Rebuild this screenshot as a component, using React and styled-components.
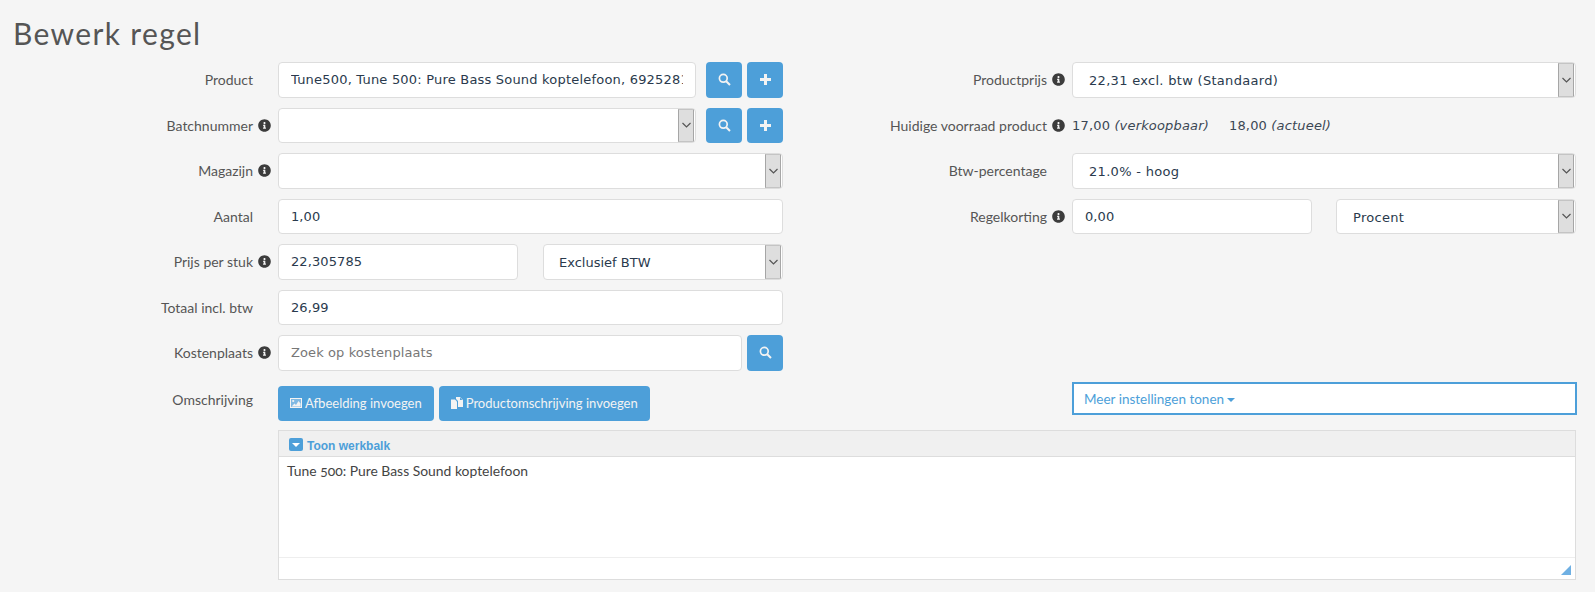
import React from "react";
import styled, { createGlobalStyle } from "styled-components";
import { FaInfoCircle } from "react-icons/fa";

const Global = createGlobalStyle`
    html, body {
        margin: 0;
        padding: 0;
        background: #f5f5f5;
    }
    body {
        height: 592px;
        overflow: hidden;
        font: 14px "Lato", sans-serif;
        color: #555;
    }
`;

const Page = styled.div`
    padding: 15px 19px 0 0;
`;

const Title = styled.h1`
    margin: 0 0 11px 13px;
    height: 36px;
    font: 400 30px/36px "Lato", sans-serif;
    letter-spacing: 1.35px;
    color: #555;
`;

const Columns = styled.div`
    display: flex;
`;

const LeftColumn = styled.div`
    width: 783px;
    display: flex;
    flex-direction: column;
`;

const RightColumn = styled.div`
    width: 793px;
    display: flex;
    flex-direction: column;
`;

const Row = styled.div`
    display: grid;
    grid-template-columns: ${(p) => p.$label}px 1fr;
    height: 35.5px;
    margin-bottom: 10px;
    &:last-child {
        margin-top: 5px;
        margin-bottom: 0;
    }
`;

const LabelCell = styled.label`
    display: flex;
    justify-content: flex-end;
    align-items: ${(p) => (p.$top ? "flex-start" : "center")};
    padding: ${(p) => (p.$top ? "5px 0 0" : "0")};
    padding-right: ${(p) => (p.$info ? "7px" : "25px")};
    font: 14px "Lato", sans-serif;
    color: #555;
    white-space: nowrap;
`;

const Info = styled(FaInfoCircle)`
    width: 13px;
    height: 13px;
    margin-left: 5px;
    color: #3c3c3c;
    align-self: center;
`;

const Controls = styled.div`
    display: flex;
    gap: ${(p) => p.$gap || 5}px;
    min-width: 0;
`;

const TextInput = styled.input`
    flex: ${(p) => (p.$width ? `0 0 ${p.$width}px` : "1 1 0")};
    min-width: 0;
    box-sizing: border-box;
    height: 35.5px;
    padding: 0 12px;
    background: #fff;
    border: 1px solid #ddd;
    border-radius: 4px;
    font: 13px "DejaVu Sans", sans-serif;
    letter-spacing: ${(p) => (p.$long ? "0.2px" : "0.1px")};
    color: #2a3a4d;
    outline: none;
    &::placeholder {
        color: #777;
        opacity: 1;
    }
`;

const Select = styled.div`
    flex: ${(p) => (p.$width ? `0 0 ${p.$width}px` : "1 1 0")};
    min-width: 0;
    box-sizing: border-box;
    height: 35.5px;
    display: flex;
    justify-content: space-between;
    background: #fff;
    border: 1px solid #ddd;
    border-radius: 4px;
    overflow: hidden;
    font: 13px/35px "DejaVu Sans", sans-serif;
    letter-spacing: ${(p) => (p.$wide ? "0.3px" : "0")};
    color: #2a3a4d;
`;

const SelectValue = styled.span`
    padding-left: ${(p) => (p.$wide ? 16 : 15)}px;
`;

const SelectArrow = styled.span`
    width: 16px;
    box-sizing: border-box;
    margin-right: 1px;
    display: flex;
    align-items: center;
    justify-content: center;
    background: #dedede;
    border: 1px solid #a6a6a6;
    border-top-color: #c4c4c4;
    border-bottom-color: #c4c4c4;
    svg {
        width: 9px;
        height: 6px;
        fill: none;
        stroke: #555;
        stroke-width: 1.2;
    }
`;

const IconButton = styled.button`
    flex: 0 0 36px;
    height: 35.5px;
    margin-left: ${(p) => (p.$first ? "5px" : "0")};
    padding: 0;
    display: flex;
    align-items: center;
    justify-content: center;
    border: 0;
    border-radius: 4px;
    background: #4d9fd9;
    color: #f3f3f3;
    svg {
        width: 13px;
        height: 13px;
    }
`;

const TextButton = styled.button`
    height: 35.5px;
    padding: 0 12px;
    display: flex;
    align-items: center;
    gap: 3px;
    border: 0;
    border-radius: 4px;
    background: #4d9fd9;
    color: #f3f3f3;
    font: 13px "Lato", sans-serif;
    white-space: nowrap;
    svg {
        width: 12px;
        height: 12px;
    }
`;

const StaticValue = styled.div`
    display: flex;
    align-items: center;
    gap: 20px;
    padding-top: 1px;
    font: 13px "DejaVu Sans", sans-serif;
    letter-spacing: 0.17px;
    color: #3b4754;
`;

const MoreButton = styled.button`
    margin-top: auto;
    margin-bottom: 6px;
    margin-left: 289px;
    box-sizing: border-box;
    width: 505px;
    height: 33px;
    padding: 0 10px;
    display: flex;
    align-items: center;
    gap: 3px;
    background: #fff;
    border: 2px solid #4d9fd9;
    font: 13.5px "Lato", sans-serif;
    color: #4d9fd9;
`;

const Caret = styled.span`
    border-left: 4px solid transparent;
    border-right: 4px solid transparent;
    border-top: 4px solid #4d9fd9;
    margin-top: 2px;
`;

const Editor = styled.div`
    position: relative;
    box-sizing: border-box;
    margin: 9px 0 0 278px;
    width: 1298px;
    height: 150px;
    display: flex;
    flex-direction: column;
    background: #fff;
    border: 1px solid #ddd;
`;

const EditorBar = styled.div`
    height: 26px;
    box-sizing: border-box;
    padding: 5px 10px 0;
    display: flex;
    align-items: center;
    gap: 4px;
    background: #f0f0f0;
    border-bottom: 1px solid #ddd;
    font: bold 12px "Liberation Sans", sans-serif;
    color: #4d9fd9;
`;

const BarToggle = styled.span`
    width: 14px;
    height: 13px;
    margin-top: -3px;
    display: flex;
    align-items: center;
    justify-content: center;
    border-radius: 2px;
    background: #4d9fd9;
    &::after {
        content: "";
        border-left: 4px solid transparent;
        border-right: 4px solid transparent;
        border-top: 4px solid #fff;
    }
`;

const EditorBody = styled.div`
    flex: 1;
    padding: 5px 8px;
    font: 13.9px "Lato", sans-serif;
    font-variant-numeric: oldstyle-nums;
    color: #444;
`;

const EditorFoot = styled.div`
    height: 21px;
    border-top: 1px solid #eee;
`;

const Grip = styled.svg`
    position: absolute;
    right: 4px;
    bottom: 4px;
    width: 10px;
    height: 10px;
    fill: #6fb0e3;
`;

const SearchIcon = () => (
    <svg viewBox="0 0 13 13" fill="none" stroke="currentColor">
        <circle cx="5.3" cy="5.3" r="3.9" strokeWidth="1.7" />
        <line x1="8.2" y1="8.2" x2="12" y2="12" strokeWidth="2" />
    </svg>
);

const PlusIcon = () => (
    <svg viewBox="0 0 13 13" fill="currentColor">
        <rect x="5" y="1" width="3" height="11" />
        <rect x="1" y="5" width="11" height="3" />
    </svg>
);

const PictureIcon = () => (
    <svg viewBox="0 0 12 12">
        <rect x="0" y="1" width="12" height="10" fill="currentColor" />
        <rect x="1" y="2" width="10" height="8" fill="#7fb9e3" />
        <circle cx="3.2" cy="4" r="1.1" fill="currentColor" />
        <polygon points="1.5,9.5 4.5,6.5 6,8 8.5,4 10.5,6.5 10.5,9.5" fill="currentColor" />
    </svg>
);

const DuplicateIcon = () => (
    <svg viewBox="0 0 12 12" fill="currentColor">
        <polygon points="0,2.5 4,2.5 6,4.5 6,12 0,12" />
        <polygon points="5,0 9,0 12,3 12,10 7,10 7,4 5,2" />
        <polygon points="9,0.6 9,3 11.4,3" fill="#4d9fd9" />
    </svg>
);

function Label({ info, top, children }) {
    return (
        <LabelCell $info={info} $top={top}>
            {children}
            {info && <Info />}
        </LabelCell>
    );
}

function Dropdown({ value, width, wide }) {
    return (
        <Select $width={width} $wide={wide}>
            <SelectValue $wide={wide}>{value}</SelectValue>
            <SelectArrow>
                <svg viewBox="0 0 9 6"><polyline points="0.5,1 4.5,5 8.5,1" /></svg>
            </SelectArrow>
        </Select>
    );
}

export default function App() {
    return (
        <Page>
            <Global />
            <Title>Bewerk regel</Title>
            <Columns>
                <LeftColumn>
                    <Row $label={278}>
                        <Label>Product</Label>
                        <Controls>
                            <TextInput $long readOnly value="Tune500, Tune 500: Pure Bass Sound koptelefoon, 6925281901234" />
                            <IconButton $first><SearchIcon /></IconButton>
                            <IconButton><PlusIcon /></IconButton>
                        </Controls>
                    </Row>
                    <Row $label={278}>
                        <Label info>Batchnummer</Label>
                        <Controls>
                            <Dropdown value="" />
                            <IconButton $first><SearchIcon /></IconButton>
                            <IconButton><PlusIcon /></IconButton>
                        </Controls>
                    </Row>
                    <Row $label={278}>
                        <Label info>Magazijn</Label>
                        <Controls>
                            <Dropdown value="" />
                        </Controls>
                    </Row>
                    <Row $label={278}>
                        <Label>Aantal</Label>
                        <Controls>
                            <TextInput readOnly value="1,00" />
                        </Controls>
                    </Row>
                    <Row $label={278}>
                        <Label info>Prijs per stuk</Label>
                        <Controls $gap={25}>
                            <TextInput readOnly value="22,305785" $width={240} />
                            <Dropdown value="Exclusief BTW" />
                        </Controls>
                    </Row>
                    <Row $label={278}>
                        <Label>Totaal incl. btw</Label>
                        <Controls>
                            <TextInput readOnly value="26,99" />
                        </Controls>
                    </Row>
                    <Row $label={278}>
                        <Label info>Kostenplaats</Label>
                        <Controls>
                            <TextInput readOnly placeholder="Zoek op kostenplaats" />
                            <IconButton><SearchIcon /></IconButton>
                        </Controls>
                    </Row>
                    <Row $label={278}>
                        <Label top>Omschrijving</Label>
                        <Controls>
                            <TextButton><PictureIcon />Afbeelding invoegen</TextButton>
                            <TextButton><DuplicateIcon />Productomschrijving invoegen</TextButton>
                        </Controls>
                    </Row>
                </LeftColumn>
                <RightColumn>
                    <Row $label={289}>
                        <Label info>Productprijs</Label>
                        <Controls>
                            <Dropdown wide value="22,31 excl. btw (Standaard)" />
                        </Controls>
                    </Row>
                    <Row $label={289}>
                        <Label info>Huidige voorraad product</Label>
                        <StaticValue>
                            <span>17,00 <em>(verkoopbaar)</em></span>
                            <span>18,00 <em>(actueel)</em></span>
                        </StaticValue>
                    </Row>
                    <Row $label={289}>
                        <Label>Btw-percentage</Label>
                        <Controls>
                            <Dropdown wide value="21.0% - hoog" />
                        </Controls>
                    </Row>
                    <Row $label={289}>
                        <Label info>Regelkorting</Label>
                        <Controls $gap={24}>
                            <TextInput readOnly value="0,00" $width={240} />
                            <Dropdown wide value="Procent" />
                        </Controls>
                    </Row>
                    <MoreButton>Meer instellingen tonen<Caret /></MoreButton>
                </RightColumn>
            </Columns>
            <Editor>
                <EditorBar><BarToggle />Toon werkbalk</EditorBar>
                <EditorBody>Tune 500: Pure Bass Sound koptelefoon</EditorBody>
                <EditorFoot />
                <Grip viewBox="0 0 10 10"><polygon points="10,0 10,10 0,10" /></Grip>
            </Editor>
        </Page>
    );
}
